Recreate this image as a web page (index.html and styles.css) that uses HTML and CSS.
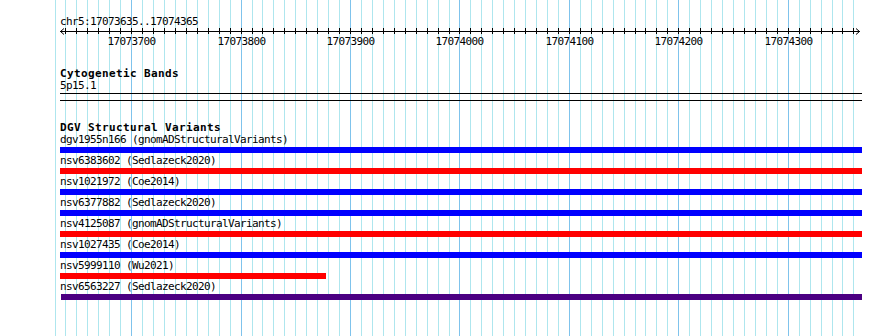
FILE: index.html
```html
<!DOCTYPE html>
<html lang="en">
<head>
  <meta charset="UTF-8">
  <title>DGV Structural Variants</title>
  <link rel="stylesheet" href="styles.css">
</head>
<body>
  <div class="panel">
    <svg class="grid" id="grid" width="890" height="336"></svg>

    <div class="tracks">
      <div class="locus">chr5:17073635..17074365</div>
      <svg class="ruler" id="ruler" width="802" height="19"></svg>

      <div class="track">
        <div class="track-title">Cytogenetic Bands</div>
        <div class="band-label">5p15.1</div>
        <div class="band"></div>
      </div>

      <div class="track">
        <div class="track-title">DGV Structural Variants</div>

        <div class="feature">
          <div class="feature-label">dgv1955n166 (gnomADStructuralVariants)</div>
          <div class="feature-bar gain" style="width: 802px"></div>
        </div>
        <div class="feature">
          <div class="feature-label">nsv6383602 (Sedlazeck2020)</div>
          <div class="feature-bar loss" style="width: 802px"></div>
        </div>
        <div class="feature">
          <div class="feature-label">nsv1021972 (Coe2014)</div>
          <div class="feature-bar gain" style="width: 802px"></div>
        </div>
        <div class="feature">
          <div class="feature-label">nsv6377882 (Sedlazeck2020)</div>
          <div class="feature-bar gain" style="width: 802px"></div>
        </div>
        <div class="feature">
          <div class="feature-label">nsv4125087 (gnomADStructuralVariants)</div>
          <div class="feature-bar loss" style="width: 802px"></div>
        </div>
        <div class="feature">
          <div class="feature-label">nsv1027435 (Coe2014)</div>
          <div class="feature-bar gain" style="width: 802px"></div>
        </div>
        <div class="feature">
          <div class="feature-label">nsv5999110 (Wu2021)</div>
          <div class="feature-bar loss" style="width: 266px"></div>
        </div>
        <div class="feature">
          <div class="feature-label">nsv6563227 (Sedlazeck2020)</div>
          <div class="feature-bar both" style="margin-left: 1px; width: 801px"></div>
        </div>
      </div>
    </div>
  </div>

  <script>
    const START = 17073635;
    const END = 17074365;
    const LEFT = 60;
    const SCALE = 800 / (END - START + 1);
    const svgNS = 'http://www.w3.org/2000/svg';

    const grid = document.getElementById('grid');
    const ruler = document.getElementById('ruler');

    // позиция в пикселях для координаты на хромосоме
    function xFor(bp) {
      return Math.round(LEFT + (bp - START) * SCALE);
    }

    function el(name, attrs) {
      const node = document.createElementNS(svgNS, name);
      for (const key in attrs) node.setAttribute(key, attrs[key]);
      return node;
    }

    // сетка на всю высоту панели
    for (let bp = 17073630; bp <= END; bp += 10) {
      const x = xFor(bp) + 0.5;
      const major = bp % 100 === 0;
      grid.appendChild(el('line', {
        x1: x, x2: x, y1: 0, y2: 336,
        class: major ? 'grid-major' : 'grid-minor'
      }));
    }

    // линейка: ось, стрелки, засечки и подписи
    ruler.appendChild(el('line', { x1: 0, x2: 800, y1: 3.5, y2: 3.5, class: 'axis' }));
    ruler.appendChild(el('polyline', { points: '4,0.5 0.5,3.5 4,6.5', class: 'axis' }));
    ruler.appendChild(el('polyline', { points: '796,0.5 799.5,3.5 796,6.5', class: 'axis' }));

    for (let bp = 17073640; bp < END; bp += 10) {
      const x = xFor(bp) - LEFT + 0.5;
      ruler.appendChild(el('line', { x1: x, x2: x, y1: 0, y2: 6, class: 'axis' }));
      if (bp % 100 === 0) {
        const label = el('text', { x: x, y: 17 });
        label.textContent = bp;
        ruler.appendChild(label);
      }
    }
  </script>
</body>
</html>
```

FILE: styles.css
```css
:root {
  --grid-minor: #aee6ee;
  --grid-major: #7fc3ec;
  --gain: #0000ff;
  --loss: #ff0000;
  --both: #4b0082;
}

* {
  box-sizing: border-box;
  margin: 0;
  padding: 0;
}

body {
  background: #fff;
  color: #000;
  font-family: "DejaVu Sans Mono", "Liberation Mono", monospace;
  font-size: 11px;
  letter-spacing: -0.62px;
}

.panel {
  position: relative;
  width: 890px;
  height: 336px;
  overflow: hidden;
}

.grid {
  position: absolute;
  top: 0;
  left: 0;
}

.grid-minor {
  stroke: var(--grid-minor);
  stroke-width: 1;
}

.grid-major {
  stroke: var(--grid-major);
  stroke-width: 1;
}

.tracks {
  position: relative;
  width: 862px;
  padding: 16px 0 0 60px;
}

.locus {
  line-height: 12px;
}

.ruler {
  display: block;
  overflow: visible;
}

.ruler .axis {
  stroke: #000;
  stroke-width: 1;
  fill: none;
}

.ruler text {
  font-family: "DejaVu Sans Mono", "Liberation Mono", monospace;
  font-size: 11px;
  letter-spacing: -0.62px;
  text-anchor: middle;
  fill: #000;
}

.track {
  margin-top: 21px;
}

.track-title {
  font-weight: bold;
  letter-spacing: 0.38px;
  line-height: 12px;
}

.band-label {
  line-height: 12px;
}

.band {
  width: 802px;
  height: 8px;
  margin-top: 1px;
  border-top: 1px solid #000;
  border-bottom: 1px solid #000;
}

.feature {
  padding-bottom: 2px;
}

.feature-label {
  line-height: 12px;
  white-space: nowrap;
}

.feature-bar {
  height: 6px;
  margin-top: 1px;
}

.gain {
  background: var(--gain);
}

.loss {
  background: var(--loss);
}

.both {
  background: var(--both);
}
```
